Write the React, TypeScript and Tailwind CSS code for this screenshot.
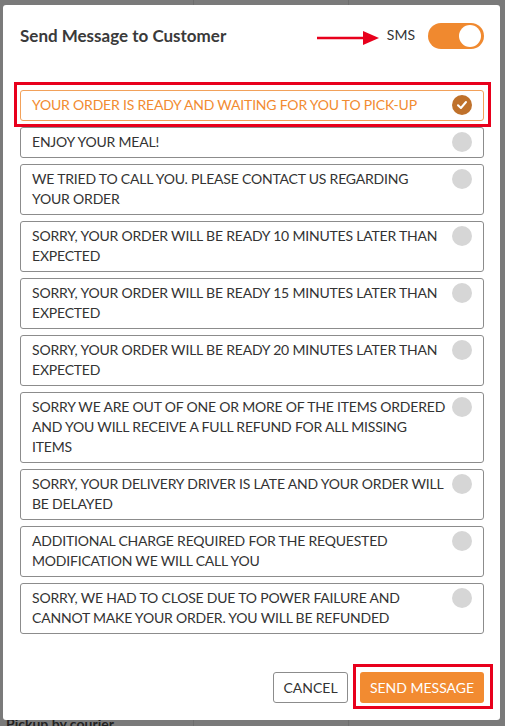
import { Fragment, useState } from 'react'

// lines are kept as shown in the design so wraps stay put
const messages: string[][] = [
  ['YOUR ORDER IS READY AND WAITING FOR YOU TO PICK-UP'],
  ['ENJOY YOUR MEAL!'],
  ['WE TRIED TO CALL YOU. PLEASE CONTACT US REGARDING', 'YOUR ORDER'],
  ['SORRY, YOUR ORDER WILL BE READY 10 MINUTES LATER THAN', 'EXPECTED'],
  ['SORRY, YOUR ORDER WILL BE READY 15 MINUTES LATER THAN', 'EXPECTED'],
  ['SORRY, YOUR ORDER WILL BE READY 20 MINUTES LATER THAN', 'EXPECTED'],
  [
    'SORRY WE ARE OUT OF ONE OR MORE OF THE ITEMS ORDERED',
    'AND YOU WILL RECEIVE A FULL REFUND FOR ALL MISSING',
    'ITEMS',
  ],
  ['SORRY, YOUR DELIVERY DRIVER IS LATE AND YOUR ORDER WILL', 'BE DELAYED'],
  ['ADDITIONAL CHARGE REQUIRED FOR THE REQUESTED', 'MODIFICATION WE WILL CALL YOU'],
  ['SORRY, WE HAD TO CLOSE DUE TO POWER FAILURE AND', 'CANNOT MAKE YOUR ORDER. YOU WILL BE REFUNDED'],
]

function Arrow() {
  return (
    <svg width="62" height="16" viewBox="0 0 62 16" className="mt-[4px]">
      <line x1="0" y1="8" x2="48" y2="8" stroke="#e8001c" strokeWidth="2.4" />
      <polygon points="46,1 62,8 46,15" fill="#e8001c" />
    </svg>
  )
}

function MessageOption({
  lines,
  selected,
  onSelect,
}: {
  lines: string[]
  selected: boolean
  onSelect: () => void
}) {
  return (
    <button
      type="button"
      onClick={onSelect}
      className={`flex w-full items-start rounded-[3px] border pb-[5px] pl-[11px] pr-[11px] pt-[4px] text-left text-[14px] leading-[20px] tracking-[-0.2px] ${
        selected
          ? 'border-[#f2a15a] text-[#f28b31]'
          : 'border-[#8c8c8c] text-[#333333]'
      }`}
    >
      <span className="flex-1 whitespace-nowrap">
        {lines.map((l, i) => (
          <Fragment key={i}>
            {i > 0 && <br />}
            {l}
          </Fragment>
        ))}
      </span>
      {selected ? (
        <span className="flex size-[20px] shrink-0 items-center justify-center rounded-full bg-[#bf712b]">
          <svg width="12" height="12" viewBox="0 0 12 12">
            <path
              d="M2 6.3 L4.9 9 L10 3"
              fill="none"
              stroke="white"
              strokeWidth="2"
              strokeLinecap="round"
              strokeLinejoin="round"
            />
          </svg>
        </span>
      ) : (
        <span className="size-[20px] shrink-0 rounded-full bg-[#d6d6d6]" />
      )}
    </button>
  )
}

export default function App() {
  const [selected, setSelected] = useState(0)
  const [sms, setSms] = useState(true)

  return (
    <div className="relative h-[726px] w-[505px] overflow-hidden bg-[#7a7a7a] font-['Lato','Liberation_Sans',sans-serif]">
      {/* page behind the overlay */}
      <div className="flex h-full">
        <div className="w-[194px] border-r border-[#6e6e6e]" />
        <div className="w-[155px] border-r border-[#6e6e6e]" />
        <div className="flex-1" />
      </div>
      <div className="absolute left-[6px] top-[714px] text-[14px] font-bold leading-[20px] text-[#222222]">
        Pickup by courier
      </div>

      {/* modal */}
      <div className="absolute left-[3px] top-[5px] flex h-[715px] w-[497px] flex-col rounded-[3px] bg-white pb-[17px] pl-[17px] pr-[16px] pt-[18px]">
        <div className="flex h-[26px] items-center">
          <h2 className="flex-1 text-[17px] font-bold leading-[26px] text-[#3a3a3a]">
            Send Message to Customer
          </h2>
          <Arrow />
          <span className="ml-[8px] mr-[13px] -mt-[4px] text-[14px] text-[#333333]">SMS</span>
          <button
            type="button"
            onClick={() => setSms(!sms)}
            className={`flex h-[26px] w-[56px] items-center rounded-full px-[3px] ${
              sms ? 'justify-end bg-[#f0892f]' : 'justify-start bg-[#cccccc]'
            }`}
          >
            <span className="size-[22px] rounded-full bg-white" />
          </button>
        </div>

        <div className="mt-[41px] flex flex-col gap-[6px]">
          {messages.map((m, i) => (
            <div key={i} className="relative">
              <MessageOption lines={m} selected={selected === i} onSelect={() => setSelected(i)} />
              {i === 0 && (
                <div className="pointer-events-none absolute -bottom-[6px] -left-[6px] -right-[7px] -top-[8px] border-[3px] border-[#e8001c]" />
              )}
            </div>
          ))}
        </div>

        <div className="mt-auto flex justify-end gap-[12px]">
          <button
            type="button"
            className="h-[31px] w-[75px] rounded-[3px] border border-[#8c8c8c] bg-white text-[14px] text-[#333333]"
          >
            CANCEL
          </button>
          <div className="relative">
            <button
              type="button"
              className="h-[31px] w-[124px] rounded-[3px] bg-[#f28b31] text-[14px] text-white"
            >
              SEND MESSAGE
            </button>
            <div className="pointer-events-none absolute -bottom-[6px] -left-[7px] -right-[9px] -top-[8px] border-[3px] border-[#e8001c]" />
          </div>
        </div>
      </div>
    </div>
  )
}
